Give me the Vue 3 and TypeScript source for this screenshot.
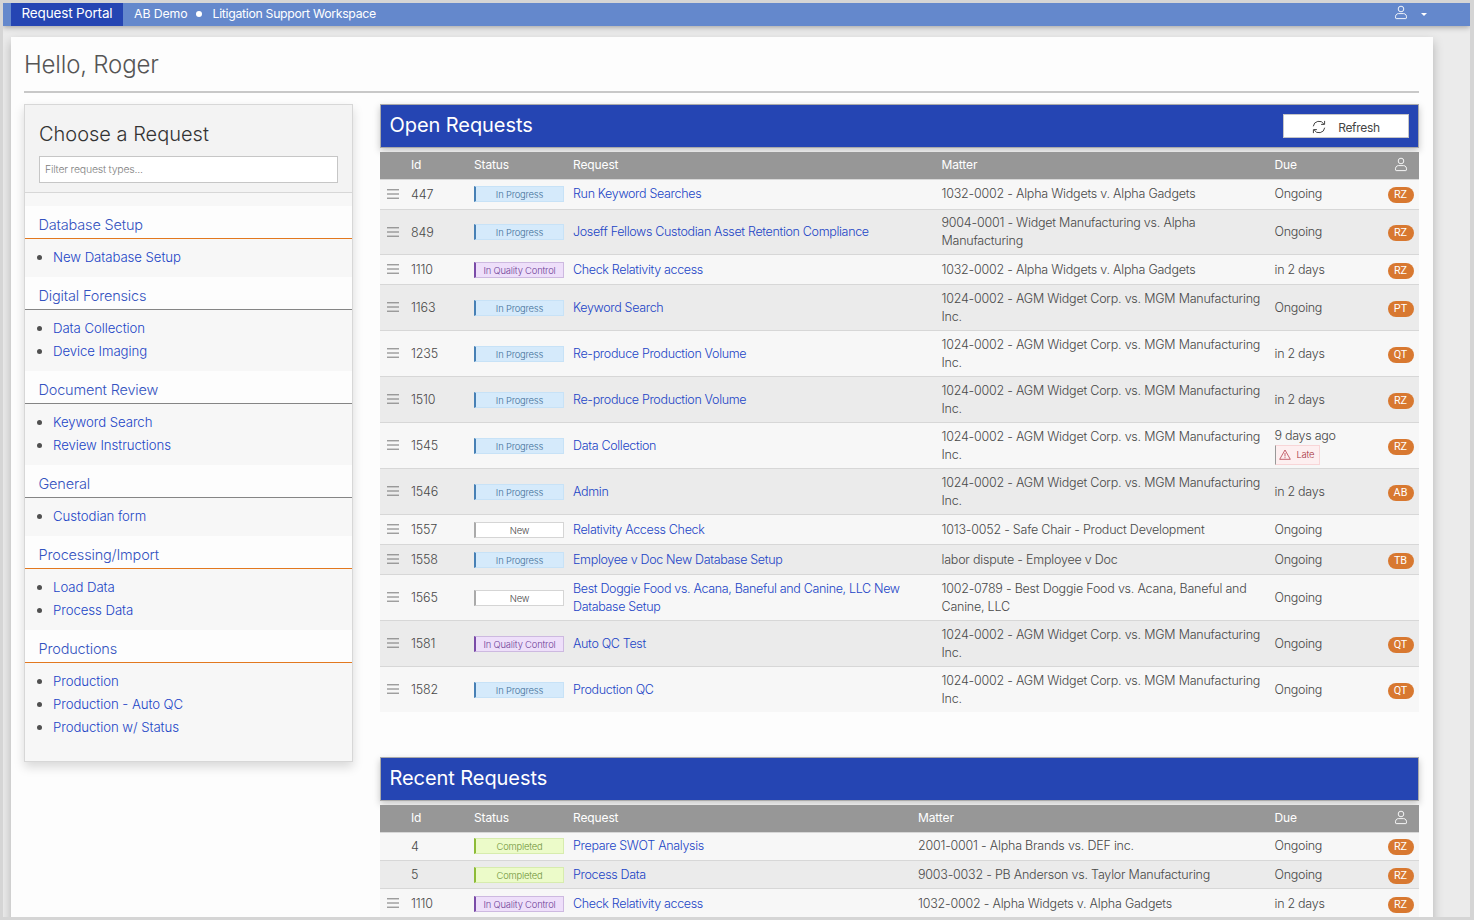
<script setup lang="ts">
interface RequestRow {
  id: string
  menu: boolean
  status: 'In Progress' | 'In Quality Control' | 'New' | 'Completed'
  request: string[]
  matter: string[]
  due: string
  late?: boolean
  owner?: string
  height: number
}

interface RequestTable {
  title: string
  kind: string
  refresh: boolean
  rows: RequestRow[]
}

interface RequestGroup {
  name: string
  accent: boolean
  items: string[]
}

const groups: RequestGroup[] = [
  { name: 'Database Setup', accent: true, items: ['New Database Setup'] },
  { name: 'Digital Forensics', accent: false, items: ['Data Collection', 'Device Imaging'] },
  { name: 'Document Review', accent: false, items: ['Keyword Search', 'Review Instructions'] },
  { name: 'General', accent: false, items: ['Custodian form'] },
  { name: 'Processing/Import', accent: true, items: ['Load Data', 'Process Data'] },
  { name: 'Productions', accent: true, items: ['Production', 'Production - Auto QC', 'Production w/ Status'] },
]

const agm = ['1024-0002 - AGM Widget Corp. vs. MGM Manufacturing', 'Inc.']
const alpha = ['1032-0002 - Alpha Widgets v. Alpha Gadgets']

const tables: RequestTable[] = [
  {
    title: 'Open Requests',
    kind: 'open',
    refresh: true,
    rows: [
      { id: '447', menu: true, status: 'In Progress', request: ['Run Keyword Searches'], matter: alpha, due: 'Ongoing', owner: 'RZ', height: 30 },
      { id: '849', menu: true, status: 'In Progress', request: ['Joseff Fellows Custodian Asset Retention Compliance'], matter: ['9004-0001 - Widget Manufacturing vs. Alpha', 'Manufacturing'], due: 'Ongoing', owner: 'RZ', height: 45 },
      { id: '1110', menu: true, status: 'In Quality Control', request: ['Check Relativity access'], matter: alpha, due: 'in 2 days', owner: 'RZ', height: 30 },
      { id: '1163', menu: true, status: 'In Progress', request: ['Keyword Search'], matter: agm, due: 'Ongoing', owner: 'PT', height: 46 },
      { id: '1235', menu: true, status: 'In Progress', request: ['Re-produce Production Volume'], matter: agm, due: 'in 2 days', owner: 'QT', height: 46 },
      { id: '1510', menu: true, status: 'In Progress', request: ['Re-produce Production Volume'], matter: agm, due: 'in 2 days', owner: 'RZ', height: 46 },
      { id: '1545', menu: true, status: 'In Progress', request: ['Data Collection'], matter: agm, due: '9 days ago', late: true, owner: 'RZ', height: 46 },
      { id: '1546', menu: true, status: 'In Progress', request: ['Admin'], matter: agm, due: 'in 2 days', owner: 'AB', height: 46 },
      { id: '1557', menu: true, status: 'New', request: ['Relativity Access Check'], matter: ['1013-0052 - Safe Chair - Product Development'], due: 'Ongoing', height: 30 },
      { id: '1558', menu: true, status: 'In Progress', request: ['Employee v Doc New Database Setup'], matter: ['labor dispute - Employee v Doc'], due: 'Ongoing', owner: 'TB', height: 30 },
      { id: '1565', menu: true, status: 'New', request: ['Best Doggie Food vs. Acana, Baneful and Canine, LLC New', 'Database Setup'], matter: ['1002-0789 - Best Doggie Food vs. Acana, Baneful and', 'Canine, LLC'], due: 'Ongoing', height: 46 },
      { id: '1581', menu: true, status: 'In Quality Control', request: ['Auto QC Test'], matter: agm, due: 'Ongoing', owner: 'QT', height: 46 },
      { id: '1582', menu: true, status: 'In Progress', request: ['Production QC'], matter: agm, due: 'Ongoing', owner: 'QT', height: 46 },
    ],
  },
  {
    title: 'Recent Requests',
    kind: 'recent',
    refresh: false,
    rows: [
      { id: '4', menu: false, status: 'Completed', request: ['Prepare SWOT Analysis'], matter: ['2001-0001 - Alpha Brands vs. DEF inc.'], due: 'Ongoing', owner: 'RZ', height: 28 },
      { id: '5', menu: false, status: 'Completed', request: ['Process Data'], matter: ['9003-0032 - PB Anderson vs. Taylor Manufacturing'], due: 'Ongoing', owner: 'RZ', height: 28 },
      { id: '1110', menu: true, status: 'In Quality Control', request: ['Check Relativity access'], matter: alpha, due: 'in 2 days', owner: 'RZ', height: 30 },
    ],
  },
]

const statusClass: Record<RequestRow['status'], string> = {
  'In Progress': 'progress',
  'In Quality Control': 'quality',
  New: 'new',
  Completed: 'completed',
}
</script>

<template>
  <div class="frame">
    <header class="topbar">
      <div class="brand">Request Portal</div>
      <div class="crumb">AB Demo</div>
      <span class="dot"></span>
      <div class="crumb workspace">Litigation Support Workspace</div>
      <div class="account">
        <svg class="person" viewBox="0 0 14 15" width="14" height="15">
          <circle cx="7" cy="4" r="2.8" />
          <path d="M1.6 13.1c-.6-2.7.9-4.5 2.8-4.5h5.2c1.9 0 3.4 1.8 2.8 4.5-.1.3-.3.5-.6.5H2.2c-.3 0-.5-.2-.6-.5z" />
        </svg>
        <span class="caret"></span>
      </div>
    </header>

    <main class="page">
      <h1>Hello, Roger</h1>
      <div class="columns">
        <aside class="sidebar">
          <div class="chooser">
            <h2>Choose a Request</h2>
            <input type="text" placeholder="Filter request types..." />
          </div>
          <section v-for="g in groups" :key="g.name">
            <h3 :class="{ accent: g.accent }">{{ g.name }}</h3>
            <ul>
              <li v-for="item in g.items" :key="item"><a>{{ item }}</a></li>
            </ul>
          </section>
        </aside>

        <div class="lists">
          <section v-for="t in tables" :key="t.kind" class="list" :class="t.kind">
            <div class="titlebar">
              <h2>{{ t.title }}</h2>
              <button v-if="t.refresh">
                <svg viewBox="0 0 14 14" width="14" height="14">
                  <path d="M1.3 6.3a5.7 5.7 0 0 1 10.6-2.2M12.7 7.7a5.7 5.7 0 0 1-10.6 2.2M12.6.9v3.5H9.1M1.4 13.1V9.6h3.5" />
                </svg>
                <span>Refresh</span>
              </button>
            </div>
            <div class="row head">
              <span></span><span>Id</span><span>Status</span><span>Request</span><span>Matter</span><span>Due</span>
              <span class="owner">
                <svg class="person" viewBox="0 0 14 15" width="14" height="15">
                  <circle cx="7" cy="4" r="2.8" />
                  <path d="M1.6 13.1c-.6-2.7.9-4.5 2.8-4.5h5.2c1.9 0 3.4 1.8 2.8 4.5-.1.3-.3.5-.6.5H2.2c-.3 0-.5-.2-.6-.5z" />
                </svg>
              </span>
            </div>
            <div v-for="r in t.rows" :key="r.id" class="row item" :style="{ height: r.height + 'px' }">
              <span class="menu">
                <svg v-if="r.menu" viewBox="0 0 12 10" width="12" height="10"><path d="M0 .8h12M0 5h12M0 9.2h12" /></svg>
              </span>
              <span class="id">{{ r.id }}</span>
              <span><b class="status" :class="statusClass[r.status]">{{ r.status }}</b></span>
              <a class="lines request"><span v-for="l in r.request" :key="l">{{ l }}</span></a>
              <span class="lines"><span v-for="l in r.matter" :key="l">{{ l }}</span></span>
              <span class="due">
                <span>{{ r.due }}</span>
                <span v-if="r.late" class="late">
                  <svg viewBox="0 0 12 11" width="12" height="11"><path d="M6 1 11.3 10.3H.7zM6 4v3.5M6 8.2v1" /></svg>
                  Late
                </span>
              </span>
              <span class="owner"><i v-if="r.owner">{{ r.owner }}</i></span>
            </div>
          </section>
        </div>
      </div>
    </main>
  </div>
</template>

<style>
body {
  overflow: hidden;
}
</style>

<style scoped>
* {
  box-sizing: border-box;
}
.frame {
  width: 1474px;
  height: 920px;
  overflow: hidden;
  border: solid #d5d5d5;
  border-width: 3px 4px 3px 3px;
  background: #ebebeb;
  color: #484848;
  font-family: Inter, "Liberation Sans", sans-serif;
  font-size: 12.5px;
  font-weight: 300;
  white-space: nowrap;
}
h1, h2, h3, ul {
  margin: 0;
  padding: 0;
  font-weight: 300;
}
.topbar {
  display: flex;
  height: 23px;
  padding-left: 8px;
  background: #6488cc;
  box-shadow: 0 1px 6px rgba(0, 0, 0, 0.35);
  color: #fff;
  font-size: 12.3px;
  font-weight: 400;
  line-height: 22px;
}
.brand {
  width: 112px;
  margin-right: 11px;
  background: #2545b3;
  font-size: 13.5px;
  line-height: 21px;
  letter-spacing: -0.15px;
  text-align: center;
}
.crumb {
  letter-spacing: -0.1px;
}
.workspace {
  letter-spacing: -0.31px;
}
.dot {
  width: 6px;
  height: 6px;
  margin: 8px 10px 0 9px;
  border-radius: 50%;
  background: #fff;
}
.account {
  display: flex;
  margin-left: auto;
  padding: 2px 43px 0 0;
}
.person {
  fill: none;
  stroke: #fff;
  stroke-width: 0.9;
}
.caret {
  width: 0;
  height: 0;
  margin: 8px 0 0 13px;
  border: solid transparent;
  border-width: 3.5px 3px 0;
  border-top-color: #fff;
}
.page {
  width: 1422px;
  height: 900px;
  margin: 11px 0 0 8px;
  padding: 0 14px 0 13px;
  background: #fdfdfd;
  box-shadow: 0 5px 10px rgba(0, 0, 0, 0.25);
}
h1 {
  height: 56px;
  border-bottom: 2px solid #c8c8c8;
  color: #555;
  font-size: 24px;
  line-height: 55px;
  letter-spacing: -0.18px;
}
.columns {
  display: flex;
  gap: 27px;
  margin-top: 11px;
}
.sidebar {
  width: 329px;
  height: 658px;
  border: 1px solid #d7d7d7;
  background: #f7f7f7;
  box-shadow: 0 5px 10px rgba(0, 0, 0, 0.15);
}
.chooser {
  height: 88px;
  margin-bottom: 13px;
  padding: 14px;
  border-bottom: 1px solid #d7d7d7;
  background: #f3f3f3;
}
.chooser h2 {
  height: 37px;
  color: #333;
  font-size: 20px;
  line-height: 30px;
}
input {
  display: block;
  width: 299px;
  height: 27px;
  padding: 0 5px;
  border: 1px solid #c6c6c6;
  background: #fff;
  font: 300 10.5px Inter, "Liberation Sans", sans-serif;
  letter-spacing: -0.22px;
}
input::placeholder {
  color: #808080;
  opacity: 1;
}
h3 {
  height: 33px;
  padding-left: 13.5px;
  border-bottom: 1px solid #858585;
  background: #fdfdfd;
  color: #3453c0;
  font-size: 14.5px;
  line-height: 38px;
  letter-spacing: -0.17px;
}
h3.accent {
  border-bottom-color: #e2781f;
}
ul {
  padding: 6.6px 0 8.2px 28px;
  list-style: none;
}
li {
  display: flex;
  align-items: center;
  height: 23.2px;
  font-size: 13.2px;
}
li a {
  margin-top: -1px;
  letter-spacing: -0.06px;
}
li::before {
  width: 5px;
  height: 5px;
  margin: 0 11px 0 -16px;
  border-radius: 50%;
  background: #505050;
  content: "";
}
a {
  color: #2144c6;
}
.lists {
  width: 1039px;
}
.list {
  margin-bottom: 45px;
}
.titlebar {
  display: flex;
  justify-content: space-between;
  height: 44px;
  margin-bottom: 4px;
  padding: 0 9px 0 8.5px;
  border: 1px solid #aaa;
  background: #2545b3;
  box-shadow: 0 3px 7px rgba(0, 0, 0, 0.22);
  color: #fff;
}
.titlebar h2 {
  font-size: 20px;
  font-weight: 400;
  line-height: 40px;
  letter-spacing: -0.07px;
}
button {
  display: flex;
  align-items: center;
  justify-content: center;
  gap: 12px;
  width: 126px;
  height: 24px;
  margin-top: 9px;
  padding: 2px 0 0;
  border: 1px solid #c6c6c6;
  background: #fff;
  color: #444;
  font: 400 12px Inter, "Liberation Sans", sans-serif;
  letter-spacing: -0.3px;
}
button svg {
  margin-top: -1px;
  fill: none;
  stroke: #444;
  stroke-width: 1;
}
.row {
  display: grid;
  grid-template-columns: 31px 63px 99px 368.5px 333px 107.5px 37px;
  align-items: center;
}
.recent .row {
  grid-template-columns: 31px 63px 99px 345px 356.5px 107.5px 37px;
}
.head {
  height: 27px;
  padding-bottom: 2px;
  background: #979797;
  color: #fff;
  font-size: 12px;
  font-weight: 400;
  letter-spacing: -0.12px;
}
.item {
  border-top: 1px solid #d7d7d7;
  background: #ebebeb;
}
.item:nth-child(odd) {
  background: #f7f7f7;
}
.head + .item {
  padding-bottom: 1px;
}
.menu {
  display: flex;
  padding-left: 7px;
}
.menu svg {
  margin-top: -1px;
}
.menu path {
  fill: none;
  stroke: #777;
  stroke-width: 1;
}
.id {
  letter-spacing: -0.15px;
}
.lines, .due {
  display: flex;
  flex-direction: column;
  line-height: 18px;
}
.lines {
  letter-spacing: -0.22px;
}
.request {
  letter-spacing: -0.33px;
}
.due {
  letter-spacing: -0.28px;
}
.status {
  display: block;
  width: 90px;
  height: 16px;
  border: 1px solid #d5d5d5;
  border-left: 2px solid #aaa;
  font-size: 9.4px;
  font-weight: 300;
  line-height: 16px;
  letter-spacing: -0.18px;
  text-align: center;
}
.progress {
  border-color: #c7e2f7;
  border-left-color: #4780b5;
  background: #d5eafb;
  color: #3f6f99;
}
.quality {
  border-color: #cdb9e0;
  border-left-color: #7a4ba8;
  background: #eedffa;
  color: #6d4096;
}
.new {
  background: #fff;
}
.completed {
  border-color: #d7ecae;
  border-left-color: #8dbb37;
  background: #ecfbc9;
  color: #6e9438;
}
.owner {
  display: flex;
  justify-content: center;
}
.owner i {
  width: 26px;
  height: 16px;
  margin-top: 2px;
  border-radius: 8px;
  background: #d87830;
  color: #fff;
  font: 400 10.8px/15px Roboto, "Liberation Sans", sans-serif;
  letter-spacing: 0;
  text-align: center;
}
.late {
  display: flex;
  align-items: center;
  gap: 6px;
  width: 45px;
  height: 20px;
  padding-left: 3px;
  border: 1px solid #f8d5d7;
  border-left-color: #999;
  background: #fdeff0;
  color: #a5303c;
  font-size: 9.5px;
}
.late svg {
  fill: none;
  stroke: #b5404c;
  stroke-width: 0.8;
}
</style>
